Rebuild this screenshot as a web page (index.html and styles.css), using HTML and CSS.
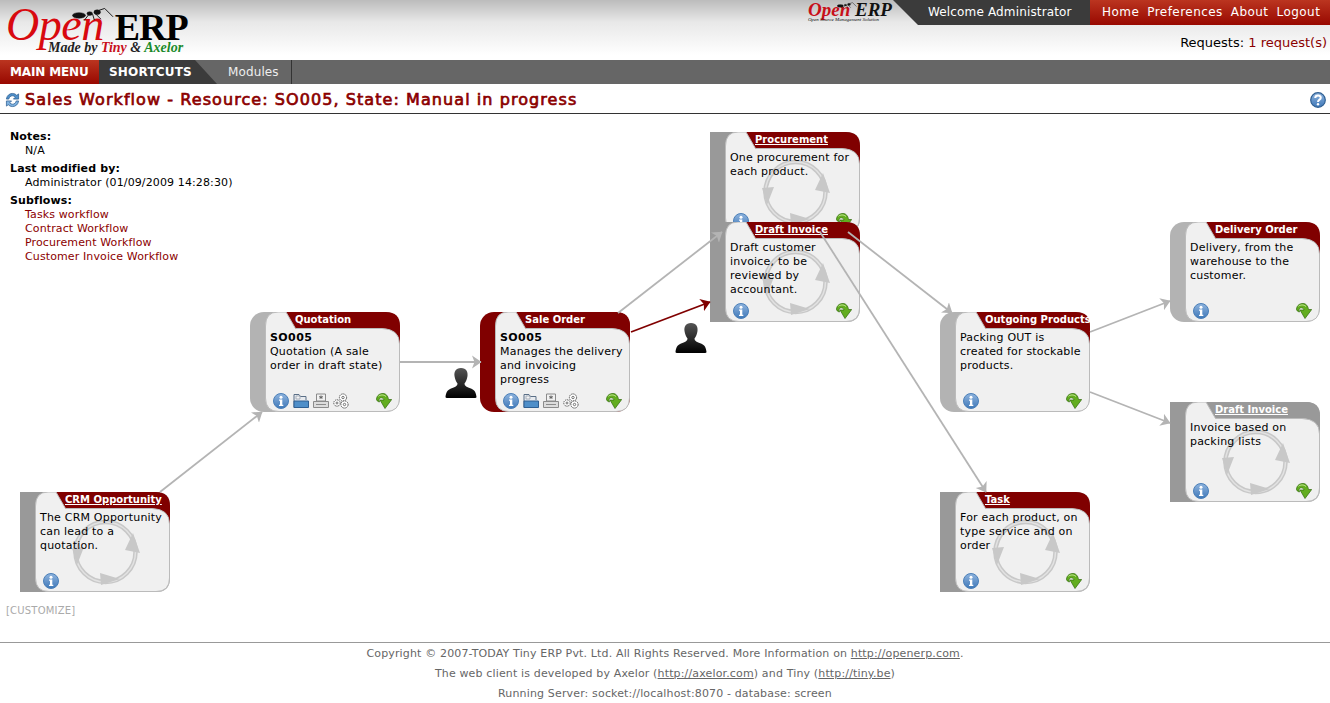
FILE: index.html
```html
<!DOCTYPE html>
<html>
<head>
<meta charset="utf-8" />
<title>Sales Workflow</title>
<link rel="stylesheet" href="styles.css">
</head>
<body>
<svg class="defs" width="0" height="0">
  <defs>
    <linearGradient id="g-info" x1="0" y1="0" x2="0" y2="1"><stop offset="0" stop-color="#8fb4de"/><stop offset="1" stop-color="#3f78b8"/></linearGradient>
    <linearGradient id="g-person" x1="0" y1="0" x2="0" y2="1"><stop offset="0" stop-color="#555"/><stop offset="0.6" stop-color="#222"/><stop offset="1" stop-color="#000"/></linearGradient>
    <marker id="head" markerWidth="12" markerHeight="14" refX="9" refY="7" orient="auto" markerUnits="userSpaceOnUse"><path class="head-grey" d="M0 0.5L9.5 7L0 13.5L2.5 7Z"/></marker>
    <marker id="head-red" markerWidth="12" markerHeight="14" refX="9" refY="7" orient="auto" markerUnits="userSpaceOnUse"><path class="head-red" d="M0 0.5L9.5 7L0 13.5L2.5 7Z"/></marker>
  </defs>
  <symbol id="shape-round" viewBox="0 0 150 100">
    <rect class="s-band" width="150" height="100" rx="14"/>
    <path class="s-tab" d="M30 0H136Q150 0 150 14V40H30Z"/>
    <path class="s-body" d="M15.5 14Q15.5 0 28 0H36L45.5 16.5H132Q149.5 17 149.5 32V86Q149.5 99.5 136 99.5H29Q15.5 99.5 15.5 86Z"/>
  </symbol>
  <symbol id="shape-flow" viewBox="0 0 150 100">
    <path class="s-band" d="M0 0H136Q150 0 150 14V86Q150 100 136 100H0Z"/>
    <path class="s-tab" d="M30 0H136Q150 0 150 14V40H30Z"/>
    <path class="s-body" d="M15.5 14Q15.5 0 28 0H36L45.5 16.5H132Q149.5 17 149.5 32V86Q149.5 99.5 136 99.5H29Q15.5 99.5 15.5 86Z"/>
  </symbol>
  <symbol id="i-cycle" viewBox="0 0 80 80">
    <circle cx="39.5" cy="38" r="30" fill="none" stroke="#c8c8c8" stroke-width="4.5"/>
    <circle cx="39.5" cy="38" r="30" fill="none" stroke="#e2e2e2" stroke-width="1.5"/>
    <path fill="#c8c8c8" d="M67 19L74 39L59 36ZM6 34L18 33L11 51ZM34 59L54 65L35 71Z"/>
  </symbol>
  <symbol id="i-info" viewBox="0 0 16 16">
    <circle cx="8" cy="8" r="7.5" fill="url(#g-info)" stroke="#4a7fb8"/>
    <circle cx="8" cy="4.2" r="1.5" fill="#fff"/>
    <path fill="#fff" d="M6 6.5H9.3V11.8H10.3V13H6V11.8H7V7.7H6Z"/>
  </symbol>
  <symbol id="i-folder" viewBox="0 0 16 16">
    <path fill="#e8ebef" stroke="#5b6f86" d="M1 14.5V1.5H6L7.5 3.5H13V7"/>
    <path fill="#f4f4f4" stroke="#8a97a6" stroke-width=".7" d="M3 3H7V6H3Z"/>
    <path fill="#4f8fc9" stroke="#2f5f92" d="M1 14.5V8H15.5V14.5Z"/>
  </symbol>
  <symbol id="i-print" viewBox="0 0 16 16">
    <path fill="#f2f2f2" stroke="#8b8b8b" d="M3.5 1H12.5V8H3.5Z"/>
    <path fill="none" stroke="#666" d="M8 2.5V6M6.3 3.4L9.7 5.1M9.7 3.4L6.3 5.1"/>
    <path fill="#dcdcdc" stroke="#8b8b8b" d="M.5 8.5H15.5V14.5H.5Z"/>
    <path stroke="#8b8b8b" d="M3 11.5H13"/>
  </symbol>
  <symbol id="i-gears" viewBox="0 0 16 16">
    <g fill="#fff" stroke="#555" stroke-dasharray="1.4 .7">
      <circle cx="10" cy="4.5" r="3.6"/><circle cx="4" cy="10" r="3.2"/><circle cx="11.5" cy="11.5" r="3.6"/>
    </g>
    <g fill="#fff" stroke="#555" stroke-width=".8">
      <circle cx="10" cy="4.5" r="1.2"/><circle cx="4" cy="10" r="1"/><circle cx="11.5" cy="11.5" r="1.2"/>
    </g>
  </symbol>
  <symbol id="i-next" viewBox="0 0 16 16">
    <path fill="#62ad1f" stroke="#2f6a0c" stroke-width=".7" d="M.5 6C1 2 4 .5 7 .5C10 .5 12 3 12.5 6.5H15.7L9 15.5L4 7H8C7.5 5 5 4 3.5 5.5C3 6 3 7.5 3.5 9C1.5 8.5 .5 7.5 .5 6Z"/>
    <path fill="none" stroke="#c9ea9c" d="M2.5 3.2C4.5 1.6 8 1.4 10 3.6"/>
  </symbol>
  <symbol id="i-person" viewBox="0 0 32 30">
    <path fill="url(#g-person)" d="M16 0C10.5 0 9 4 9.5 8C10 11 11 13.5 12.5 15.5C12.5 18 10 19 6 20.5C2 22 1 25 .5 29Q.5 30 2 30H30Q31.5 30 31.5 29C31 25 30 22 26 20.5C22 19 19.5 18 19.5 15.5C21 13.5 22 11 22.5 8C23 4 21.5 0 16 0Z"/>
  </symbol>
  <symbol id="i-ant" viewBox="0 0 90 30">
    <g fill="#111" stroke="#111">
      <ellipse cx="15" cy="17" rx="14" ry="6"/><ellipse cx="38" cy="13" rx="6" ry="4"/><ellipse cx="54" cy="10" rx="7" ry="5"/>
      <path fill="none" stroke-width="2" d="M58 6L70 2L88 20M36 15L26 28M44 14L48 27M50 13L62 25"/>
    </g>
  </symbol>
</svg>

<div class="header">
  <div class="logo">
    <svg class="logo-ant"><use href="#i-ant"/></svg>
    <div class="logo-name"><span class="logo-open">Open</span><span class="logo-erp">ERP</span></div>
    <div class="logo-tag">Made by <span class="red">Tiny</span> &amp; <span class="green">Axelor</span></div>
  </div>
  <div class="header-right">
    <div class="topbar">
      <div class="logo-small">
        <svg class="logo-small-ant"><use href="#i-ant"/></svg>
        <div class="logo-small-name"><span class="red">Open</span> ERP</div>
        <div class="logo-small-tag">Open Source Management Solution</div>
      </div>
      <div class="welcome">Welcome Administrator</div>
      <div class="toplinks"><a>Home</a><a>Preferences</a><a>About</a><a>Logout</a></div>
    </div>
    <div class="requests">Requests: <a>1 request(s)</a></div>
  </div>
</div>

<div class="menubar">
  <div class="main-menu">MAIN MENU</div>
  <div class="shortcuts">SHORTCUTS</div>
  <div class="modules">Modules</div>
</div>

<div class="titlebar">
  <svg class="title-icon" viewBox="0 0 16 16">
    <path fill="#4f8fc9" stroke="#2f5f92" stroke-width=".8" d="M1.5 7C2 3 5 1 8 1C10 1 11.5 2 12.5 3L14.5 1.5V7H9L11 5C10 4 9 3.5 8 3.5C6 3.5 4.5 5 4 7Z"/>
    <path fill="#7fb2e0" stroke="#2f5f92" stroke-width=".8" d="M14.5 9C14 13 11 15 8 15C6 15 4.5 14 3.5 13L1.5 14.5V9H7L5 11C6 12 7 12.5 8 12.5C10 12.5 11.5 11 12 9Z"/>
  </svg>
  <h1>Sales Workflow - Resource: SO005, State: Manual in progress</h1>
  <svg class="help-icon" viewBox="0 0 16 16">
    <circle cx="8" cy="8" r="7.3" fill="url(#g-info)" stroke="#2f5f92" stroke-width="1.2"/>
    <path fill="none" stroke="#fff" stroke-width="2" d="M5.2 6C5.4 2.8 10.8 2.8 10.8 5.8C10.8 7.8 8 7.6 8 10"/>
    <circle cx="8" cy="12.3" r="1.2" fill="#fff"/>
  </svg>
</div>

<div class="main">
  <div class="info">
    <dl>
      <dt>Notes:</dt>
      <dd>N/A</dd>
      <dt>Last modified by:</dt>
      <dd>Administrator (01/09/2009 14:28:30)</dd>
      <dt>Subflows:</dt>
      <dd><a>Tasks workflow</a></dd>
      <dd><a>Contract Workflow</a></dd>
      <dd><a>Procurement Workflow</a></dd>
      <dd><a>Customer Invoice Workflow</a></dd>
    </dl>
  </div>
  <div class="customize">[CUSTOMIZE]</div>

  <div class="canvas">
    <div class="node flow n-procurement">
      <svg class="shape"><use href="#shape-flow"/></svg>
      <svg class="cycle"><use href="#i-cycle"/></svg>
      <div class="node-title"><a>Procurement</a></div>
      <div class="node-text">One procurement for each product.</div>
      <div class="node-icons"><svg class="ico"><use href="#i-info"/></svg><svg class="ico next"><use href="#i-next"/></svg></div>
    </div>
    <div class="node flow n-draft">
      <svg class="shape"><use href="#shape-flow"/></svg>
      <svg class="cycle"><use href="#i-cycle"/></svg>
      <div class="node-title"><a>Draft Invoice</a></div>
      <div class="node-text">Draft customer invoice, to be reviewed by accountant.</div>
      <div class="node-icons"><svg class="ico"><use href="#i-info"/></svg><svg class="ico next"><use href="#i-next"/></svg></div>
    </div>
    <div class="node n-quotation">
      <svg class="shape"><use href="#shape-round"/></svg>
      <div class="node-title">Quotation</div>
      <div class="node-text"><b>SO005</b><br>Quotation (A sale order in draft state)</div>
      <div class="node-icons"><svg class="ico"><use href="#i-info"/></svg><svg class="ico"><use href="#i-folder"/></svg><svg class="ico"><use href="#i-print"/></svg><svg class="ico"><use href="#i-gears"/></svg><svg class="ico next"><use href="#i-next"/></svg></div>
    </div>
    <div class="node active n-sale">
      <svg class="shape"><use href="#shape-round"/></svg>
      <div class="node-title">Sale Order</div>
      <div class="node-text"><b>SO005</b><br>Manages the delivery and invoicing progress</div>
      <div class="node-icons"><svg class="ico"><use href="#i-info"/></svg><svg class="ico"><use href="#i-folder"/></svg><svg class="ico"><use href="#i-print"/></svg><svg class="ico"><use href="#i-gears"/></svg><svg class="ico next"><use href="#i-next"/></svg></div>
    </div>
    <div class="node flow n-crm">
      <svg class="shape"><use href="#shape-flow"/></svg>
      <svg class="cycle"><use href="#i-cycle"/></svg>
      <div class="node-title"><a>CRM Opportunity</a></div>
      <div class="node-text">The CRM Opportunity can lead to a quotation.</div>
      <div class="node-icons"><svg class="ico"><use href="#i-info"/></svg></div>
    </div>
    <div class="node n-outgoing">
      <svg class="shape"><use href="#shape-round"/></svg>
      <div class="node-title">Outgoing Products</div>
      <div class="node-text">Packing OUT is created for stockable products.</div>
      <div class="node-icons"><svg class="ico"><use href="#i-info"/></svg><svg class="ico next"><use href="#i-next"/></svg></div>
    </div>
    <div class="node n-delivery">
      <svg class="shape"><use href="#shape-round"/></svg>
      <div class="node-title">Delivery Order</div>
      <div class="node-text">Delivery, from the warehouse to the customer.</div>
      <div class="node-icons"><svg class="ico"><use href="#i-info"/></svg><svg class="ico next"><use href="#i-next"/></svg></div>
    </div>
    <div class="node flow off n-draft2">
      <svg class="shape"><use href="#shape-flow"/></svg>
      <svg class="cycle"><use href="#i-cycle"/></svg>
      <div class="node-title"><a>Draft Invoice</a></div>
      <div class="node-text">Invoice based on packing lists</div>
      <div class="node-icons"><svg class="ico"><use href="#i-info"/></svg><svg class="ico next"><use href="#i-next"/></svg></div>
    </div>
    <div class="node flow n-task">
      <svg class="shape"><use href="#shape-flow"/></svg>
      <svg class="cycle"><use href="#i-cycle"/></svg>
      <div class="node-title"><a>Task</a></div>
      <div class="node-text">For each product, on type service and on order</div>
      <div class="node-icons"><svg class="ico"><use href="#i-info"/></svg><svg class="ico next"><use href="#i-next"/></svg></div>
    </div>

    <svg class="arrows" viewBox="0 114 1330 528">
      <line class="edge" x1="160" y1="492" x2="262" y2="412"/>
      <line class="edge" x1="400" y1="362" x2="481" y2="362"/>
      <line class="edge" x1="618" y1="313" x2="722" y2="232"/>
      <line class="edge hot" x1="631" y1="332" x2="710" y2="302"/>
      <line class="edge" x1="848" y1="232" x2="952" y2="313"/>
      <line class="edge" x1="820" y1="232" x2="986" y2="492"/>
      <line class="edge" x1="1090" y1="332" x2="1170" y2="301"/>
      <line class="edge" x1="1090" y1="392" x2="1170" y2="423"/>
    </svg>
    <svg class="person p-one"><use href="#i-person"/></svg>
    <svg class="person p-two"><use href="#i-person"/></svg>
  </div>
</div>

<div class="footer">
  <p>Copyright © 2007-TODAY Tiny ERP Pvt. Ltd. All Rights Reserved. More Information on <a>http://openerp.com</a>.</p>
  <p>The web client is developed by Axelor (<a>http://axelor.com</a>) and Tiny (<a>http://tiny.be</a>)</p>
  <p>Running Server: socket://localhost:8070 - database: screen</p>
</div>
</body>
</html>
```

FILE: styles.css
```css
*{ padding:0; margin:0; box-sizing:border-box; }
html, body{ height:703px; overflow:hidden; }
body{ background:#fff; color:#000; font:11px/14px "DejaVu Sans", sans-serif; letter-spacing:.12px; }
a{ color:#8b0000; }
.defs{ position:absolute; }
.red{ color:#c8101a; }
.green{ color:#1a8a2a; }

/* header */
.header{ display:flex; justify-content:space-between; height:60px; background:linear-gradient(#bcbcbc, #e8e8e8 22px, #fff 55px); }
.logo{ position:relative; padding:4px 0 0 6px; font-family:"Liberation Serif", serif; letter-spacing:0; }
.logo-name{ display:flex; align-items:baseline; height:36px; line-height:42px; }
.logo-open{ color:#d8090f; font-size:46px; font-style:italic; letter-spacing:-.5px; }
.logo-erp{ margin-left:11px; font-size:38px; font-weight:bold; letter-spacing:-1px; }
.logo-tag{ margin:1px 0 0 42px; font-size:14px; line-height:14px; font-weight:bold; font-style:italic; color:#222; }
.logo-ant{ position:absolute; left:72px; top:7px; width:42px; height:15px; }

.header-right{ width:530px; }
.topbar{ display:flex; height:25px; color:#fff; font-size:12px; line-height:25px; letter-spacing:.15px; }
.logo-small{ position:relative; width:93px; padding:3px 0 0 8px; font-family:"Liberation Serif", serif; color:#111; letter-spacing:0; }
.logo-small-name{ font-size:19px; line-height:14px; font-style:italic; font-weight:bold; white-space:nowrap; }
.logo-small-tag{ font-size:5px; line-height:6px; font-style:italic; white-space:nowrap; }
.logo-small-ant{ position:absolute; left:37px; top:2px; width:20px; height:7px; }
.welcome{ width:197px; padding-left:35px; background:#3b3b3b; clip-path:polygon(0 0, 100% 0, 100% 100%, 25px 100%); }
.toplinks{ flex:1; display:flex; gap:8px; padding-left:12px; letter-spacing:.45px; background:linear-gradient(#bb3520, #980800); }
.toplinks a{ color:#fff; }
.requests{ padding:11px 3px 0 0; text-align:right; font-size:13px; letter-spacing:0; }

/* menu */
.menubar{ display:flex; height:24px; background:#666; color:#fff; line-height:24px; }
.main-menu{ width:99px; padding-left:10px; font-size:12px; font-weight:bold; letter-spacing:-.15px; background:linear-gradient(#bb3520, #980800); }
.shortcuts{ width:118px; padding-left:10px; font-size:12px; font-weight:bold; letter-spacing:.2px; background:#3b3b3b; clip-path:polygon(0 0, 96px 0, 100% 100%, 0 100%); }
.modules{ width:75px; padding-left:11px; font-size:12px; color:#eee; border-right:1px solid #333; }

/* title */
.titlebar{ display:flex; align-items:center; height:30px; padding:2px 4px 0 5px; border-bottom:1px solid #333; }
.title-icon, .help-icon{ width:15px; height:16px; }
.titlebar h1{ flex:1; margin-left:5px; font-size:16px; color:#8b0000; font-weight:normal; letter-spacing:1.07px; -webkit-text-stroke:.7px #8b0000; }
.help-icon{ width:16px; }

/* workflow */
.main{ position:relative; height:528px; }
.info{ padding:16px 0 0 10px; }
.info dl{ display:flex; flex-direction:column; }
.info dt{ margin-top:4px; font-weight:bold; }
.info dt:first-child{ margin-top:0; }
.info dd{ padding-left:15px; }
.customize{ position:absolute; left:6px; top:490px; color:#aaa; font-size:10px; letter-spacing:.2px; }
.canvas{ position:absolute; left:0; top:0; width:100%; height:100%; }
.arrows{ position:absolute; left:0; top:0; width:1330px; height:528px; pointer-events:none; }
.edge{ stroke:#b4b4b4; stroke-width:1.8; marker-end:url(#head); }
.edge.hot{ stroke:#800000; marker-end:url(#head-red); }
.head-grey{ fill:#b4b4b4; }
.head-red{ fill:#800000; }

.node{ position:absolute; width:150px; height:100px; --band:#b3b3b3; --tab:#800000; }
.node.flow{ --band:#999; }
.node.active{ --band:#800000; }
.node.off{ --tab:#999; }
.shape{ position:absolute; left:0; top:0; width:150px; height:100px; }
.s-band{ fill:var(--band); }
.s-tab{ fill:var(--tab); }
.s-body{ fill:#f0f0f0; stroke:#bbb; }
.cycle{ position:absolute; left:46px; top:22px; width:80px; height:80px; }
.node-title{ position:absolute; left:45px; top:1px; font-size:10px; line-height:14px; font-weight:bold; color:#fff; white-space:nowrap; letter-spacing:0; }
.node-title a{ color:#fff; text-decoration:underline; }
.node-text{ position:absolute; left:20px; top:19px; width:127px; line-height:14px; letter-spacing:.2px; }
.node-text b{ letter-spacing:.4px; }
.node-icons{ position:absolute; left:23px; right:8px; bottom:3px; display:flex; gap:4px; }
.ico{ width:16px; height:16px; }
.next{ margin-left:auto; }
.person{ position:absolute; width:32px; height:30px; }
.p-one{ left:445px; top:254px; }
.p-two{ left:675px; top:209px; }

.n-procurement{ left:710px; top:18px; }
.n-draft{ left:710px; top:108px; }
.n-quotation{ left:250px; top:198px; }
.n-sale{ left:480px; top:198px; }
.n-crm{ left:20px; top:378px; }
.n-outgoing{ left:940px; top:198px; }
.n-delivery{ left:1170px; top:108px; }
.n-draft2{ left:1170px; top:288px; }
.n-task{ left:940px; top:378px; }

/* footer */
.footer{ border-top:1px solid #999; padding-top:1px; text-align:center; color:#666; letter-spacing:.15px; }
.footer p{ height:20px; line-height:20px; }
.footer a{ color:#666; text-decoration:underline; }
```
